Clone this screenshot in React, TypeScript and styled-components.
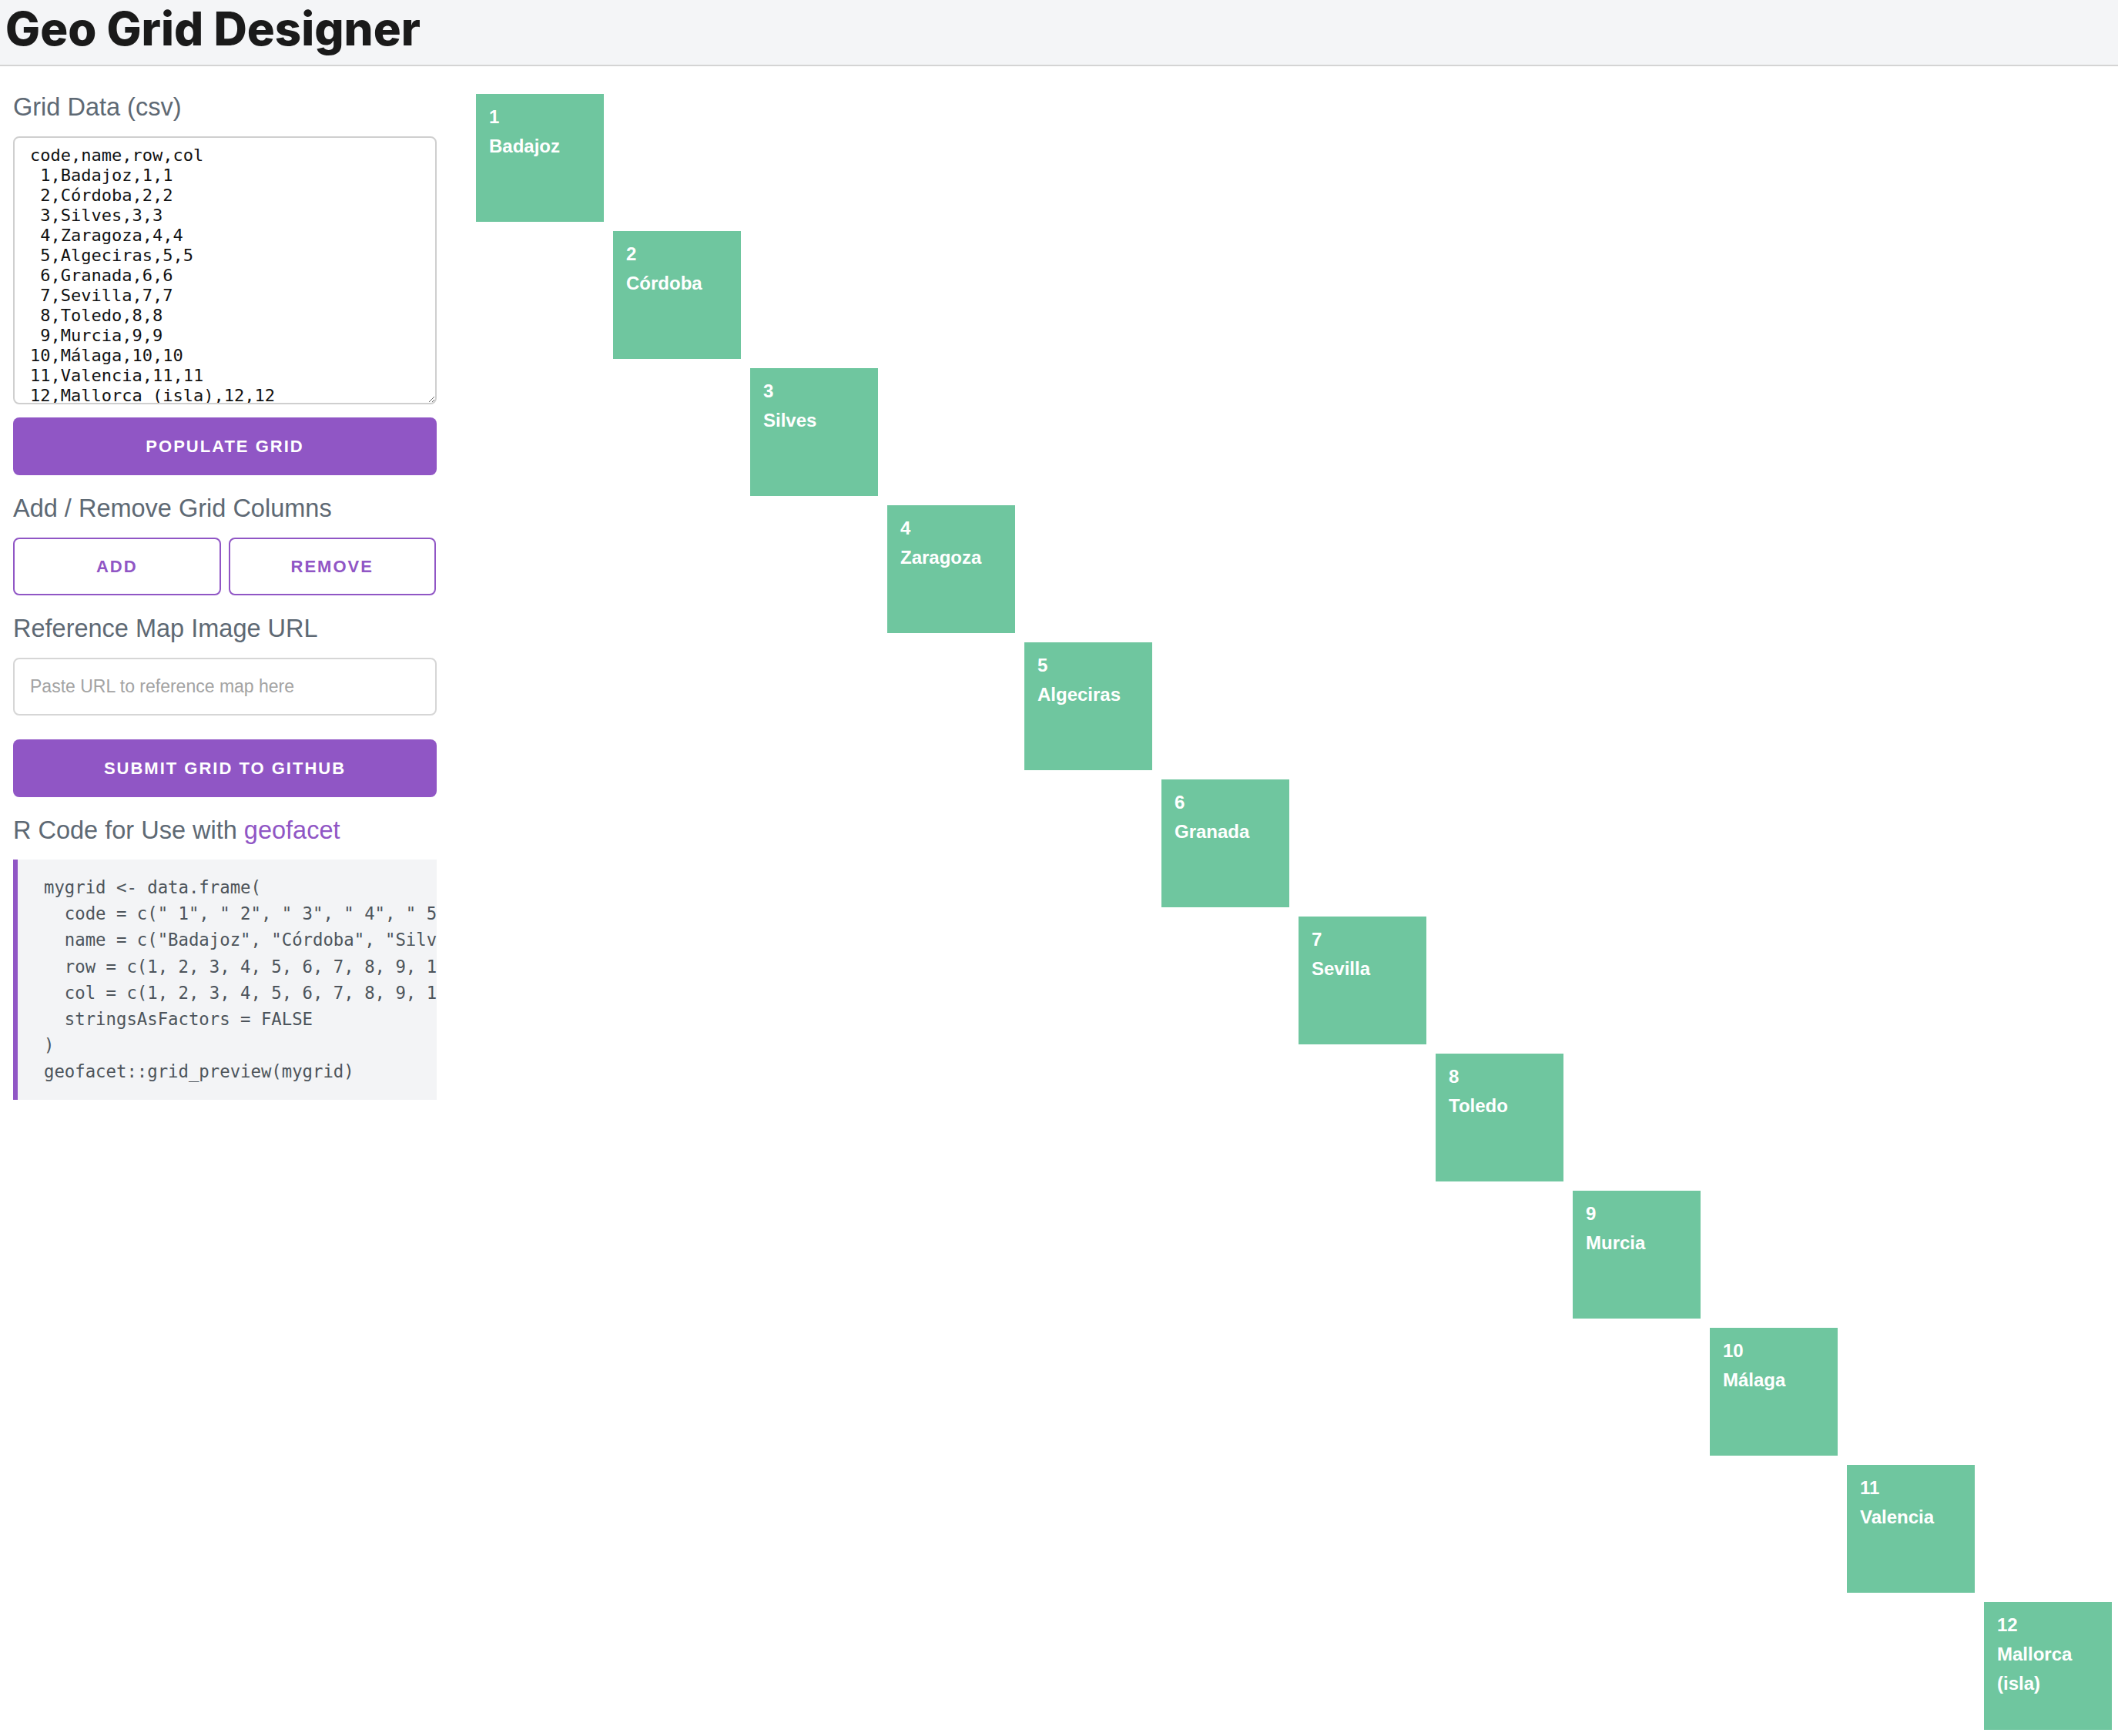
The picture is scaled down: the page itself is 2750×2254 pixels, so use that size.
import React from 'react'
import styled, { createGlobalStyle } from 'styled-components'

const colors = {
  purple: '#9056c5',
  green: '#6fc69f',
  label: '#5e6974',
  headerBg: '#f4f5f7',
  codeBg: '#f3f4f6',
}

const GlobalStyle = createGlobalStyle`
  body {
    margin: 0;
    background: #fff;
    font-family: "Liberation Sans", Arial, sans-serif;
  }
  * {
    box-sizing: border-box;
  }
`

const Header = styled.header`
  height: 86px;
  background: ${colors.headerBg};
  border-bottom: 2px solid #d4d4d4;
  padding: 0 7px;
`

const Title = styled.h1`
  margin: 0;
  font-family: Inter, "Liberation Sans", sans-serif;
  font-weight: 800;
  font-size: 60px;
  line-height: 74px;
  color: #1a1a1a;
`

const Main = styled.main`
  display: flex;
  align-items: flex-start;
  gap: 51px;
  padding-left: 17px;
`

const Sidebar = styled.aside`
  display: flex;
  flex-direction: column;
  width: 550px;
  flex-shrink: 0;
  padding-top: 33px;
`

const SectionLabel = styled.h3<{ $first?: boolean }>`
  margin: ${(p) => (p.$first ? '0' : '23px')} 0 18px;
  font-size: 32.5px;
  line-height: 40px;
  font-weight: 400;
  color: ${colors.label};

  a {
    color: ${colors.purple};
    text-decoration: none;
  }
`

const CsvInput = styled.textarea`
  display: block;
  width: 100%;
  height: 348px;
  padding: 10px 20px;
  border: 2px solid #cfcfcf;
  border-radius: 8px;
  font-family: "DejaVu Sans Mono", "Liberation Mono", monospace;
  font-size: 22px;
  line-height: 26px;
  color: #111;
  resize: vertical;
  overflow: hidden;
  white-space: pre;
`

const SolidButton = styled.button<{ $top: number }>`
  height: 75px;
  margin-top: ${(p) => p.$top}px;
  border: none;
  border-radius: 8px;
  background: ${colors.purple};
  color: #fff;
  font-family: "Liberation Sans", Arial, sans-serif;
  font-weight: 700;
  font-size: 22px;
  letter-spacing: 2px;
  text-transform: uppercase;
`

const ButtonPair = styled.div`
  display: grid;
  grid-template-columns: 1fr 1fr;
  gap: 10px;
  width: 549px;
`

const OutlineButton = styled.button`
  height: 75px;
  border: 2px solid ${colors.purple};
  border-radius: 8px;
  background: #fff;
  color: ${colors.purple};
  font-family: "Liberation Sans", Arial, sans-serif;
  font-weight: 700;
  font-size: 22px;
  letter-spacing: 2px;
  text-transform: uppercase;
`

const UrlInput = styled.input`
  height: 75px;
  padding: 0 20px;
  border: 2px solid #d6d6d6;
  border-radius: 8px;
  font-family: "Liberation Sans", Arial, sans-serif;
  font-size: 23px;

  &::placeholder {
    color: #a3a3a3;
  }
`

const CodeBlock = styled.pre`
  margin: 0;
  height: 312px;
  padding: 19px 0 19px 34px;
  border-left: 6px solid ${colors.purple};
  background: ${colors.codeBg};
  font-family: "DejaVu Sans Mono", "Liberation Mono", monospace;
  font-size: 22.3px;
  line-height: 34.2px;
  color: #4d545b;
  overflow: hidden;
  white-space: pre;
`

const Board = styled.section`
  display: grid;
  grid-template-columns: repeat(12, 166px);
  grid-auto-rows: 166px;
  gap: 12px;
  padding-top: 36px;
`

const Tile = styled.div<{ $row: number; $col: number }>`
  grid-row: ${(p) => p.$row};
  grid-column: ${(p) => p.$col};
  padding: 11px 17px;
  background: ${colors.green};
  color: #fff;
  font-weight: 700;
  font-size: 24px;
  line-height: 38px;
`

interface Cell {
  code: string
  name: string
  row: number
  col: number
}

const cells: Cell[] = [
  'Badajoz',
  'Córdoba',
  'Silves',
  'Zaragoza',
  'Algeciras',
  'Granada',
  'Sevilla',
  'Toledo',
  'Murcia',
  'Málaga',
  'Valencia',
  'Mallorca (isla)',
].map((name, i) => ({
  code: String(i + 1).padStart(2, ' '),
  name,
  row: i + 1,
  col: i + 1,
}))

const csv =
  'code,name,row,col\n' +
  cells.map((c) => `${c.code},${c.name},${c.row},${c.col}`).join('\n')

const quote = (v: string) => `"${v}"`

const rCode = [
  'mygrid <- data.frame(',
  `  code = c(${cells.map((c) => quote(c.code)).join(', ')}),`,
  `  name = c(${cells.map((c) => quote(c.name)).join(', ')}),`,
  `  row = c(${cells.map((c) => c.row).join(', ')}),`,
  `  col = c(${cells.map((c) => c.col).join(', ')}),`,
  '  stringsAsFactors = FALSE',
  ')',
  'geofacet::grid_preview(mygrid)',
].join('\n')

export default function App() {
  return (
    <>
      <GlobalStyle />
      <Header>
        <Title>Geo Grid Designer</Title>
      </Header>
      <Main>
        <Sidebar>
          <SectionLabel $first>Grid Data (csv)</SectionLabel>
          <CsvInput defaultValue={csv} spellCheck={false} />
          <SolidButton $top={17}>Populate Grid</SolidButton>
          <SectionLabel>Add / Remove Grid Columns</SectionLabel>
          <ButtonPair>
            <OutlineButton>Add</OutlineButton>
            <OutlineButton>Remove</OutlineButton>
          </ButtonPair>
          <SectionLabel>Reference Map Image URL</SectionLabel>
          <UrlInput placeholder="Paste URL to reference map here" />
          <SolidButton $top={31}>Submit Grid to GitHub</SolidButton>
          <SectionLabel>
            R Code for Use with <a href="#">geofacet</a>
          </SectionLabel>
          <CodeBlock>{rCode}</CodeBlock>
        </Sidebar>
        <Board>
          {cells.map((c) => (
            <Tile key={c.code} $row={c.row} $col={c.col}>
              <div>{c.code.trim()}</div>
              <div>{c.name}</div>
            </Tile>
          ))}
        </Board>
      </Main>
    </>
  )
}
